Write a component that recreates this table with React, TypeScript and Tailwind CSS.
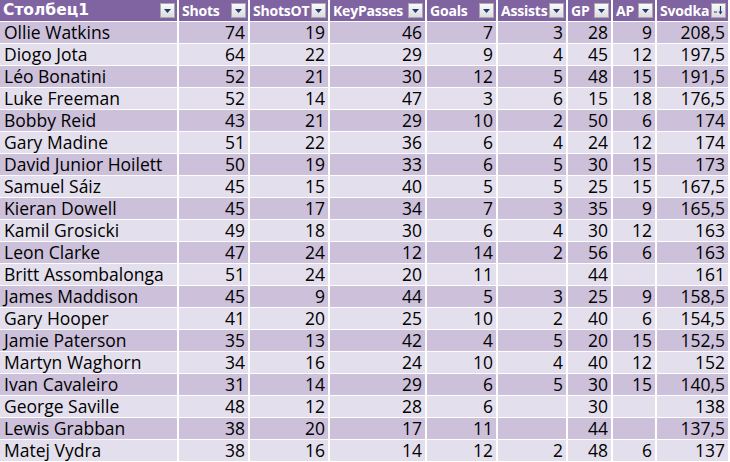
const columns = [
  { name: "Столбец1", width: "w-[179px]" },
  { name: "Shots", width: "w-[71px]" },
  { name: "ShotsOT", width: "w-[80px]" },
  { name: "KeyPasses", width: "w-[97px]" },
  { name: "Goals", width: "w-[71px]" },
  { name: "Assists", width: "w-[70px]" },
  { name: "GP", width: "w-[45px]" },
  { name: "AP", width: "w-[44px]" },
  { name: "Svodka", width: "w-[73px]" },
];

const rows: (string | number)[][] = [
  ["Ollie Watkins", 74, 19, 46, 7, 3, 28, 9, "208,5"],
  ["Diogo Jota", 64, 22, 29, 9, 4, 45, 12, "197,5"],
  ["Léo Bonatini", 52, 21, 30, 12, 5, 48, 15, "191,5"],
  ["Luke Freeman", 52, 14, 47, 3, 6, 15, 18, "176,5"],
  ["Bobby Reid", 43, 21, 29, 10, 2, 50, 6, "174"],
  ["Gary Madine", 51, 22, 36, 6, 4, 24, 12, "174"],
  ["David Junior Hoilett", 50, 19, 33, 6, 5, 30, 15, "173"],
  ["Samuel Sáiz", 45, 15, 40, 5, 5, 25, 15, "167,5"],
  ["Kieran Dowell", 45, 17, 34, 7, 3, 35, 9, "165,5"],
  ["Kamil Grosicki", 49, 18, 30, 6, 4, 30, 12, "163"],
  ["Leon Clarke", 47, 24, 12, 14, 2, 56, 6, "163"],
  ["Britt Assombalonga", 51, 24, 20, 11, "", 44, "", "161"],
  ["James Maddison", 45, 9, 44, 5, 3, 25, 9, "158,5"],
  ["Gary Hooper", 41, 20, 25, 10, 2, 40, 6, "154,5"],
  ["Jamie Paterson", 35, 13, 42, 4, 5, 20, 15, "152,5"],
  ["Martyn Waghorn", 34, 16, 24, 10, 4, 40, 12, "152"],
  ["Ivan Cavaleiro", 31, 14, 29, 6, 5, 30, 15, "140,5"],
  ["George Saville", 48, 12, 28, 6, "", 30, "", "138"],
  ["Lewis Grabban", 38, 20, 17, 11, "", 44, "", "137,5"],
  ["Matej Vydra", 38, 16, 14, 12, 2, 48, 6, "137"],
];

const FilterButton = ({ sorted }: { sorted?: boolean }) => (
  <span className="w-[15px] h-[15px] shrink-0 flex items-center justify-center border border-[#a9a9b0] bg-gradient-to-b from-[#fafafa] to-[#dcdce0]">
    {sorted ? (
      <svg width="11" height="11" viewBox="0 0 11 11">
        <path d="M1 6.5 L4 6.5 L4 7.5 L1 7.5 Z" fill="#1e3a6e" />
        <path d="M7.5 1 L7.5 8" stroke="#1e3a6e" strokeWidth="1.2" />
        <path d="M5.5 6.5 L7.5 9.5 L9.5 6.5 Z" fill="#1e3a6e" />
      </svg>
    ) : (
      <svg width="9" height="6" viewBox="0 0 9 6">
        <path d="M1 1 L8 1 L4.5 5 Z" fill="#1e3a6e" />
      </svg>
    )}
  </span>
);

export default function App() {
  return (
    <div className="w-[730px] h-[462px] overflow-hidden bg-white text-[17.5px] text-black font-['Open_Sans',sans-serif]">
      <div className="flex h-[22px] bg-[#8064a2] border-b border-white">
        {columns.map((col, i) => (
          <div
            key={col.name}
            className={`${col.width} shrink-0 flex items-center justify-between pl-[3px] pr-[2px] border-r-2 border-white font-bold text-white text-[14px] tracking-[-0.2px] leading-none`}
          >
            <span className={i === 0 ? "font-['DejaVu_Sans',sans-serif] text-[15.5px] tracking-normal" : ""}>
              {col.name}
            </span>
            <FilterButton sorted={i === columns.length - 1} />
          </div>
        ))}
      </div>
      {rows.map((row, r) => (
        <div
          key={r}
          className={`flex h-[22px] border-b border-white ${r % 2 === 0 ? "bg-[#ccc0da]" : "bg-[#e4dfec]"}`}
        >
          {row.map((cell, c) => (
            <div
              key={c}
              className={`${columns[c].width} shrink-0 flex items-center border-r-2 border-white leading-none ${c === 0 ? "pl-[4px]" : "justify-end pr-[3px]"}`}
            >
              {cell}
            </div>
          ))}
        </div>
      ))}
    </div>
  );
}
